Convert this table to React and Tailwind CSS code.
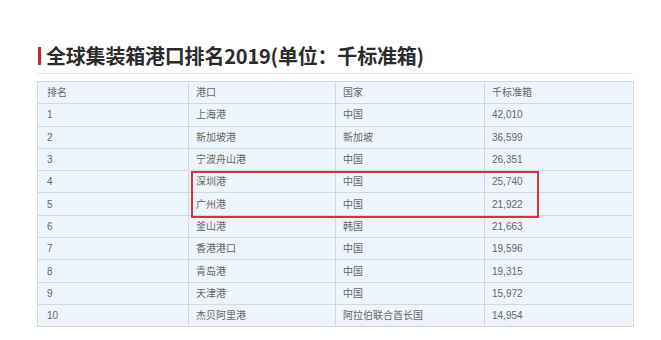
import React from 'react';

const rows = [
  ['1', '上海港', '中国', '42,010'],
  ['2', '新加坡港', '新加坡', '36,599'],
  ['3', '宁波舟山港', '中国', '26,351'],
  ['4', '深圳港', '中国', '25,740'],
  ['5', '广州港', '中国', '21,922'],
  ['6', '釜山港', '韩国', '21,663'],
  ['7', '香港港口', '中国', '19,596'],
  ['8', '青岛港', '中国', '19,315'],
  ['9', '天津港', '中国', '15,972'],
  ['10', '杰贝阿里港', '阿拉伯联合酋长国', '14,954'],
];

const headers = ['排名', '港口', '国家', '千标准箱'];

export default function App() {
  return (
    <div className="w-[661px] h-[340px] bg-white pl-[37px] pr-[28px] pt-[44px] font-['Liberation_Sans','Noto_Sans_CJK_SC',sans-serif]">
      {/* --- Title --- */}
      <div className="flex items-center gap-[5px] pl-[1px] h-[24px]">
        <div className="w-[3px] h-[18px] bg-[#c3262e]" />
        <h1 className="text-[20px] leading-[24px] font-bold text-[#2b2b2b] font-['Noto_Sans_CJK_SC',sans-serif] tracking-[-0.2px]">
          全球集装箱港口排名2019(单位：千标准箱)
        </h1>
      </div>
      <div className="mt-[5px] border-t border-[#e4e4e4]" />

      {/* --- Table --- */}
      <div className="relative mt-[7px]">
        <table className="w-[596px] border-collapse bg-[#eef4fb] text-[10px] text-[#666] table-fixed">
          <colgroup>
            <col className="w-[151px]" />
            <col className="w-[147px]" />
            <col className="w-[149px]" />
            <col className="w-[149px]" />
          </colgroup>
          <tbody>
            <tr className="h-[22.3px]">
              {headers.map((h, i) => (
                <td key={h} className={`border border-[#cfd9e4] ${i === 0 ? 'pl-[9px]' : 'pl-[7px]'}`}>{h}</td>
              ))}
            </tr>
            {rows.map((r) => (
              <tr key={r[0]} className="h-[22.3px]">
                {r.map((c, i) => (
                  <td key={i} className={`border border-[#cfd9e4] ${i === 0 ? 'pl-[9px]' : 'pl-[7px]'}`}>{c}</td>
                ))}
              </tr>
            ))}
          </tbody>
        </table>
        {/* highlight box */}
        <div className="absolute left-[154px] top-[90px] w-[348px] h-[47px] border-2 border-[#d2363d] pointer-events-none" />
      </div>
    </div>
  );
}
